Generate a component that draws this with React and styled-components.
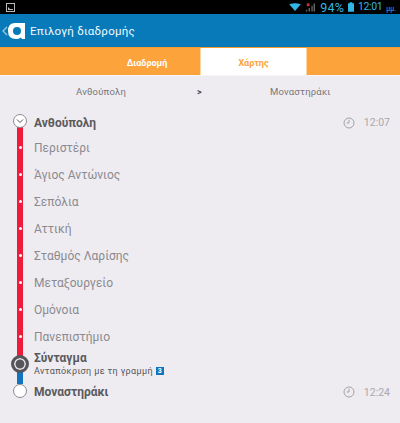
import React from "react";
import styled, { createGlobalStyle } from "styled-components";

const Global = createGlobalStyle`
  html, body { margin: 0; padding: 0; background: #eeecf1; }
  body { font-family: "Roboto", "Liberation Sans", sans-serif; }
`;
const Page = styled.div`width: 400px; height: 423px; overflow: hidden; background: #eeecf1;`;
const StatusBar = styled.div`
  height: 14px; background: #000; display: flex; align-items: center; padding: 0 4px 0 6px;
  color: #33b5e5; font-family: "Roboto", sans-serif;
`;
const StatusLeft = styled.div`flex: 1; display: flex; align-items: center;`;
const Battery = styled.span`font-size: 12.5px; letter-spacing: 0.2px; margin: 2px 4px 0 5px; line-height: 14px;`;
const Clock = styled.span`font-size: 10.5px; letter-spacing: -0.4px; margin-left: 4px; line-height: 14px;`;
const Ampm = styled.span`font-size: 7px; margin-left: 4px; margin-top: 3px;`;
const Header = styled.header`
  height: 33px; background: #087ab9; display: flex; align-items: center; padding-left: 2px;
  color: #f2f8fb; font-size: 11.5px; letter-spacing: 0.25px;
`;
const Logo = styled.svg`margin: 0 4px 0 0; flex: none;`;
const Tabs = styled.nav`
  height: 28px; background: #fca33b; display: flex; box-sizing: border-box; border-top: 1px solid #f59a2e;
`;
const Tab = styled.div`
  width: ${p => p.$w}px; display: flex; align-items: center; justify-content: center;
  font-size: 9px; font-weight: 700; padding-top: 2px; box-sizing: border-box;
  color: ${p => (p.$active ? "#fca33b" : "#fff")};
  background: ${p => (p.$active ? "#fff" : "transparent")};
  border-left: ${p => (p.$active ? "1px solid #ffd7a6" : "0")};
  border-right: ${p => (p.$active ? "1px solid #ffd7a6" : "0")};
`;
const Spacer = styled.div`width: ${p => p.$w}px;`;
const Route = styled.div`
  height: 35px; box-sizing: border-box; display: grid; grid-template-columns: 200px 0 1fr; align-items: center;
  border-top: 1px solid #f7f5f8; color: #77767a; font-size: 9.5px; letter-spacing: 0.2px; padding-bottom: 3px;
`;
const RouteFrom = styled.div`padding-left: 76px;`;
const RouteArrow = styled.div`font-weight: 700; font-size: 9px; color: #444; margin-left: -3px;`;
const RouteTo = styled.div`padding-left: 70px;`;
const Timeline = styled.div`display: flex; flex-direction: column;`;
const Row = styled.div`display: flex; height: ${p => p.$h}px;`;
const Rail = styled.div`
  width: 6px; margin: 0 11px 0 17px; flex: none; position: relative;
  display: flex; align-items: center; justify-content: center;
  background: ${p => p.$fill || "transparent"};
`;
const Dot = styled.span`width: 3px; height: 3px; border-radius: 50%; background: #fff;`;
const Terminal = styled.span`
  position: absolute; left: -4px; top: ${p => p.$top}px; width: 14px; height: 14px; box-sizing: border-box;
  border-radius: 50%; background: #fff; border: 1px solid #8d8d91;
  display: flex; align-items: center; justify-content: center;
`;
const Hub = styled.span`
  position: absolute; left: -6px; top: ${p => p.$top}px; width: 18px; height: 18px; box-sizing: border-box;
  border-radius: 50%; background: #55555a; border: 3px solid #55555a; box-shadow: inset 0 0 0 1.5px #eeecf1;
`;
const Body = styled.div`flex: 1; display: flex; align-items: center; padding: ${p => p.$top || 0}px 10px 0 0;`;
const StopName = styled.span`
  flex: 1; font-size: 12px; color: ${p => (p.$major ? "#5a5a5e" : "#8b8a8f")};
  font-weight: ${p => (p.$major ? 700 : 400)};
`;
const Time = styled.span`display: flex; align-items: center; gap: 9px; color: #a9a8ac; font-size: 10.5px;`;
const Connect = styled.div`font-size: 9px; color: #55555a; letter-spacing: 0.38px; display: flex; align-items: center; gap: 3px;`;
const HubText = styled.div`display: flex; flex-direction: column; gap: 1px; align-self: flex-start; padding-top: 1px;`;
const Badge = styled.span`
  width: 8px; height: 8px; background: #1273bf; color: #fff; font-size: 7px; font-weight: 700;
  display: flex; align-items: center; justify-content: center; line-height: 1;
`;

const ClockIcon = () => (
  <svg width="12" height="12" viewBox="0 0 12 12" fill="none" stroke="#a3a2a6" strokeWidth="1">
    <circle cx="6" cy="6" r="5" /><path d="M6 2.800V6H3.600" />
  </svg>
);

const RED = "#ee1c3a";
const stops = ["Περιστέρι", "Άγιος Αντώνιος", "Σεπόλια", "Αττική", "Σταθμός Λαρίσης", "Μεταξουργείο", "Ομόνοια", "Πανεπιστήμιο"];

export default function App() {
  return (
    <Page>
      <Global />
      <StatusBar>
        <StatusLeft>
          <svg width="9" height="9" viewBox="0 0 9 9"><rect x=".5" y=".5" width="8" height="8" fill="none" stroke="#bbb" /><path d="M2 7V4l2 2h3v1z" fill="#bbb" /></svg>
        </StatusLeft>
        <svg width="12" height="8" viewBox="0 0 13 9"><path d="M0 1.500Q6.500-1 13 1.500L6.500 9z" fill="#33b5e5" /></svg>
        <svg width="10" height="11" viewBox="0 0 11 11" style={{ marginLeft: 4 }}><path d="M1 10h1.500V8H1zM4 10h1.500V6H4zM7 10h1.500V3.500H7zM9.500 10H11V1H9.500z" fill="#666" /><path d="M2 1h3v3H2z" fill="#c33" /></svg>
        <Battery>94%</Battery>
        <svg width="6" height="10" viewBox="0 0 7 11"><path d="M2 0h3v1h2v10H0V1h2z" fill="#33b5e5" /></svg>
        <Clock>12:01</Clock>
        <Ampm>μμ.</Ampm>
      </StatusBar>
      <Header>
        <svg width="6" height="10" viewBox="0 0 6 10" fill="none" stroke="#9fcbe4" strokeWidth="1.200"><path d="M5 1 1 5l4 4" /></svg>
        <Logo width="18" height="18" viewBox="0 0 18 18">
          <path fillRule="evenodd" fill="#fff" d="M7 1h10v16h-3l-1-1.500Q11 17 8 17 0 17 0 9t7-8zM9 5Q5 5 5 9t4 4q4 0 4-4T9 5z" />
        </Logo>
        Επιλογή διαδρομής
      </Header>
      <Tabs>
        <Spacer $w={100} />
        <Tab $w={94}>Διαδρομή</Tab>
        <Spacer $w={6} />
        <Tab $w={107} $active>Χάρτης</Tab>
      </Tabs>
      <Route>
        <RouteFrom>Ανθούπολη</RouteFrom>
        <RouteArrow>&gt;</RouteArrow>
        <RouteTo>Μοναστηράκι</RouteTo>
      </Route>
      <Timeline>
        <Row $h={24}>
          <Rail $fill={`linear-gradient(transparent 10px, ${RED} 10px)`}>
            <Terminal $top={4}>
              <svg width="8" height="6" viewBox="0 0 8 6" fill="none" stroke="#555" strokeWidth="1"><path d="M1 1.500 4 4.500 7 1.500" /></svg>
            </Terminal>
          </Rail>
          <Body $top={1}>
            <StopName $major>Ανθούπολη</StopName>
            <Time><ClockIcon />12:07</Time>
          </Body>
        </Row>
        {stops.map((s) => (
          <Row $h={27} key={s}>
            <Rail $fill={RED}><Dot /></Rail>
            <Body><StopName>{s}</StopName></Body>
          </Row>
        ))}
        <Row $h={34}>
          <Rail $fill={`linear-gradient(${RED} 8px, #1273bf 8px)`}>
            <Hub $top={5} />
          </Rail>
          <Body>
            <HubText>
              <StopName $major>Σύνταγμα</StopName>
              <Connect>Ανταπόκριση με τη γραμμή <Badge>3</Badge></Connect>
            </HubText>
          </Body>
        </Row>
        <Row $h={16}>
          <Rail>
            <Terminal $top={0} />
          </Rail>
          <Body>
            <StopName $major>Μοναστηράκι</StopName>
            <Time><ClockIcon />12:24</Time>
          </Body>
        </Row>
      </Timeline>
    </Page>
  );
}
